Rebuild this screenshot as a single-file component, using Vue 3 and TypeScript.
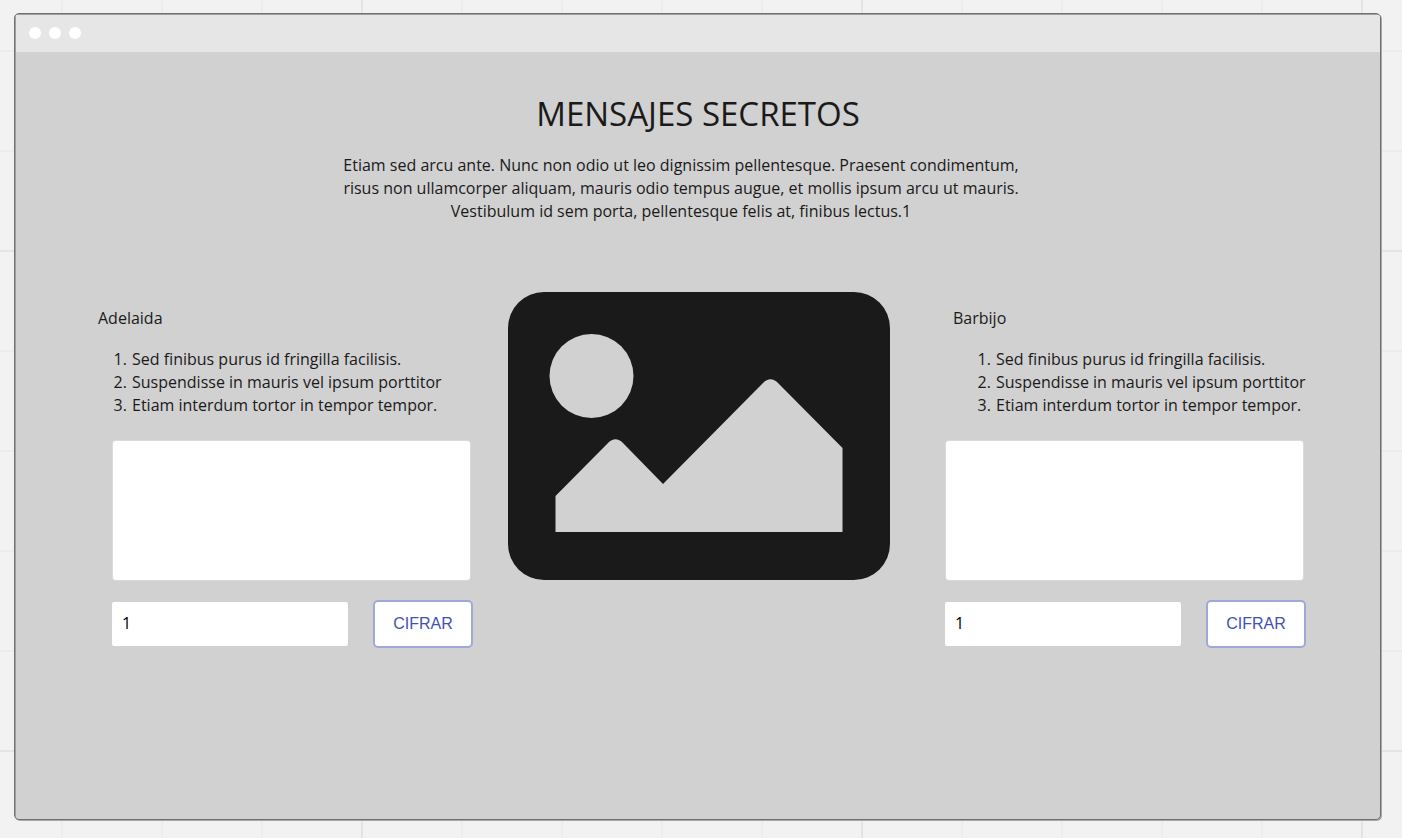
<script setup lang="ts">
import { ref } from 'vue'

interface Person {
  id: string
  name: string
  side: 'left' | 'right'
}

const people: Person[] = [
  { id: 'adelaida', name: 'Adelaida', side: 'left' },
  { id: 'barbijo', name: 'Barbijo', side: 'right' },
]

const steps: string[] = [
  'Sed finibus purus id fringilla facilisis.',
  'Suspendisse in mauris vel ipsum porttitor',
  'Etiam interdum tortor in tempor tempor.',
]

const messages = ref<string[]>(['', ''])
const offsets = ref<string[]>(['1', '1'])
</script>

<template>
  <div class="board">
    <div class="window">
      <header class="titlebar">
        <span class="dot"></span>
        <span class="dot"></span>
        <span class="dot"></span>
      </header>
      <main class="content">
        <h1>MENSAJES SECRETOS</h1>
        <p class="intro">
          Etiam sed arcu ante. Nunc non odio ut leo dignissim pellentesque. Praesent condimentum,
          risus non ullamcorper aliquam, mauris odio tempus augue, et mollis ipsum arcu ut mauris.
          Vestibulum id sem porta, pellentesque felis at, finibus lectus.1
        </p>
        <div class="columns">
          <section v-for="(person, i) in people" :key="person.id" class="person" :class="person.side">
            <h2><label :for="person.id + '-message'">{{ person.name }}</label></h2>
            <ol>
              <li v-for="step in steps" :key="step">{{ step }}</li>
            </ol>
            <form class="cipher" @submit.prevent>
              <textarea :id="person.id + '-message'" v-model="messages[i]"></textarea>
              <div class="controls">
                <input v-model="offsets[i]" type="text" :aria-label="'Desplazamiento ' + person.name" />
                <button type="submit">CIFRAR</button>
              </div>
            </form>
          </section>
          <svg class="picture" viewBox="0 0 382 288" aria-hidden="true">
            <rect width="382" height="288" rx="36" fill="#1a1a1a" />
            <circle cx="83.500" cy="84" r="42" fill="#d1d1d1" />
            <path
              d="M47.500 240V204L100 151Q107.500 143.500 115 151L155 192L255 91Q262.500 83.500 270 91L334.500 156V240Z"
              fill="#d1d1d1"
            />
          </svg>
        </div>
      </main>
    </div>
  </div>
</template>

<style>
body {
  margin: 0;
}
</style>

<style scoped>
.board {
  box-sizing: border-box;
  min-height: 100vh;
  padding: 13px 21px 18px 14px;
  display: flex;
  background-color: #f2f2f2;
  background-image:
    linear-gradient(90deg, #e4e4e4 2px, transparent 2px),
    linear-gradient(#e4e4e4 2px, transparent 2px),
    linear-gradient(90deg, #ececec 2px, transparent 2px),
    linear-gradient(#ececec 2px, transparent 2px);
  background-size: 500px 500px, 500px 500px, 100px 100px, 100px 100px;
  background-position: 361px 0, 0 250px, 61px 0, 0 50px;
  color: #1a1a1a;
  font-family: "Open Sans", "Noto Sans", sans-serif;
  font-size: 16px;
}

.window {
  flex: 1;
  display: flex;
  flex-direction: column;
  padding: 1px 0 0 1px;
  border: 1px solid #707070;
  border-radius: 5px;
  box-shadow: inset 1px 1px 0 #a0a0a0, 1px 1px 0 #a8a8a8;
  background: #d1d1d1;
  overflow: hidden;
}

.titlebar {
  box-sizing: border-box;
  height: 37px;
  padding: 0 13px 2px;
  display: flex;
  align-items: center;
  gap: 8px;
  background: #e6e6e6;
}

.dot {
  width: 12px;
  height: 12px;
  border-radius: 50%;
  background: #fff;
}

.content {
  padding: 38px 74px 40px 82px;
}

h1 {
  margin: 0;
  padding-right: 8px;
  font-size: 33px;
  font-weight: 400;
  line-height: 48px;
  text-align: center;
}

.intro {
  max-width: 690px;
  margin: 16px auto 0;
  padding-right: 42px;
  line-height: 23px;
  text-align: center;
}

.columns {
  margin-top: 69px;
  display: grid;
  grid-template-columns: 375px 1fr 361px;
  align-items: start;
}

.picture {
  grid-column: 2;
  grid-row: 1;
  justify-self: center;
  width: 382px;
  height: auto;
  margin-right: 20px;
}

.person {
  grid-row: 1;
  padding-top: 15px;
}

.left {
  grid-column: 1;
}

.right {
  grid-column: 3;
}

h2 {
  margin: 0;
  font-size: 16px;
  font-weight: 400;
  line-height: 23px;
}

.right h2 {
  padding-left: 8px;
}

ol {
  margin: 18px 0 0;
  padding-left: 33px;
  line-height: 23px;
  white-space: nowrap;
}

li {
  padding-left: 1px;
}

.right ol {
  padding-left: 50px;
}

.cipher {
  margin-top: 24px;
}

.left .cipher {
  margin-left: 14px;
}

textarea {
  display: block;
  box-sizing: border-box;
  width: calc(100% - 4px);
  height: 139px;
  margin: 0 0 0 1px;
  padding: 10px;
  border: 0;
  border-radius: 3px;
  box-shadow: 0 0 0 1px #dadada;
  background: #fff;
  font: inherit;
  resize: none;
}

.controls {
  margin-top: 20px;
  display: flex;
  align-items: center;
  justify-content: space-between;
}

input {
  box-sizing: border-box;
  width: 236px;
  height: 44px;
  padding: 0 10px 2px;
  border: 0;
  border-radius: 2px;
  background: #fff;
  color: #000;
  font: inherit;
}

button {
  box-sizing: border-box;
  width: 100px;
  height: 48px;
  padding: 0;
  border: 2px solid #9fa8da;
  border-radius: 5px;
  background: #fff;
  color: #3f51b5;
  font-family: "Liberation Sans", Arial, sans-serif;
  font-size: 16px;
}
</style>
